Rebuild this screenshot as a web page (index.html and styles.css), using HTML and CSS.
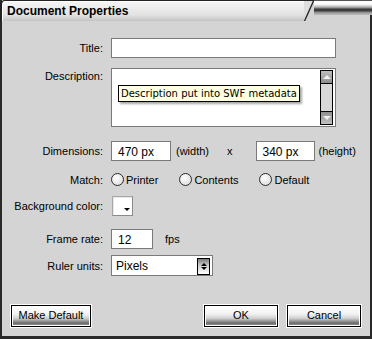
FILE: index.html
```html
<!DOCTYPE html>
<html>
<head>
    <link rel="stylesheet" href="styles.css">
</head>
<body>
    <div class="window">
        <!-- Title bar -->
        <div class="titlebar">
            <div class="tab">Document Properties</div>
            <svg class="slant" width="10" height="21" viewBox="0 0 10 21">
                <polygon points="0,1 9,1 1,21 0,21" fill="#dedede"/>
                <line x1="9.5" y1="1" x2="0.5" y2="21" stroke="#222" stroke-width="1.3"/>
                <line x1="0" y1="0.5" x2="10" y2="0.5" stroke="#222"/>
            </svg>
            <div class="stripes"></div>
        </div>

        <div class="form">
            <div class="row">
                <label class="label">Title:</label>
                <div class="field title-field"></div>
            </div>

            <div class="row row-top desc-row">
                <label class="label">Description:</label>
                <div class="field desc-field">
                    <div class="scrollbar">
                        <div class="sb-btn"><span class="tri-up"></span></div>
                        <div class="sb-track"></div>
                        <div class="sb-btn"><span class="tri-down"></span></div>
                    </div>
                    <div class="tooltip">Description put into SWF metadata</div>
                </div>
            </div>

            <div class="row dims-row">
                <label class="label">Dimensions:</label>
                <div class="field dim-field">470 px</div>
                <span class="unit">(width)</span>
                <span class="times">x</span>
                <div class="field dim-field dim2">340 px</div>
                <span class="unit unit-h">(height)</span>
            </div>

            <div class="row match-row">
                <label class="label">Match:</label>
                <div class="radios">
                    <span class="radio-item"><span class="radio"></span>Printer</span>
                    <span class="radio-item"><span class="radio"></span>Contents</span>
                    <span class="radio-item"><span class="radio"></span>Default</span>
                </div>
            </div>

            <div class="row bg-row">
                <label class="label">Background color:</label>
                <div class="swatch"><span class="tri-down small"></span></div>
            </div>

            <div class="row fps-row">
                <label class="label">Frame rate:</label>
                <div class="field fps-field">12</div>
                <span class="fps">fps</span>
            </div>

            <div class="row ruler-row">
                <label class="label">Ruler units:</label>
                <div class="field select-field">
                    <span class="select-text">Pixels</span>
                    <span class="spinner">
                        <span class="tri-up tiny"></span>
                        <span class="tri-down tiny"></span>
                    </span>
                </div>
            </div>
        </div>

        <div class="footer">
            <button class="btn btn-wide">Make Default</button>
            <div class="footer-right">
                <button class="btn">OK</button>
                <button class="btn">Cancel</button>
            </div>
        </div>
    </div>
</body>
</html>
```

FILE: styles.css
```css
body {
    margin: 0;
    font-family: "Liberation Sans", Arial, sans-serif;
    font-size: 11px;
    color: #000;
    background: #d4d4d4;
}

.window {
    width: 372px;
    height: 339px;
    box-sizing: border-box;
    background: #d4d4d4;
    border-left: 2px solid #2a2a2a;
    border-right: 2px solid #2a2a2a;
    border-bottom: 3px solid #2a2a2a;
    display: flex;
    flex-direction: column;
}

/* title bar */
.titlebar {
    display: flex;
    align-items: flex-start;
    height: 21px;
    margin-left: -2px;
    margin-right: -2px;
}

.tab {
    width: 304px;
    height: 21px;
    box-sizing: border-box;
    border-top: 1px solid #222;
    border-left: 2px solid #222;
    border-radius: 5px 0 0 0;
    background: linear-gradient(#f6f6f6, #e2e2e2 70%, #c4c4c4);
    box-shadow: inset 1px 1px 0 #fff;
    font-weight: bold;
    font-size: 12px;
    padding: 3px 0 0 5px;
}

.slant {
    display: block;
    flex: none;
}

.stripes {
    flex: 1;
    height: 15px;
    background: linear-gradient(to bottom,
        #555 0px, #555 1px,
        #ffffff 1px, #ffffff 4px,
        #d0d0d0 6px,
        #8c8c8c 8px,
        #3c3c3c 9px, #3c3c3c 11px,
        #8a8a8a 12px,
        #c0c0c0 15px);
}

/* form */
.form {
    padding-top: 17px;
}

.row {
    display: flex;
    align-items: center;
}

.row-top {
    align-items: flex-start;
}

.label {
    width: 101px;
    margin-right: 8px;
    text-align: right;
    flex: none;
}

.field {
    box-sizing: border-box;
    height: 20px;
    background: #fff;
    border: 1px solid #7a7a7a;
    padding: 3px 6px 0;
    position: relative;
    font-size: 12px;
}

.title-field {
    width: 225px;
}

.desc-row {
    margin-top: 10px;
}

.desc-row .label {
    padding-top: 2px;
}

.desc-field {
    width: 225px;
    height: 59px;
    padding: 1px 1px 1px 0;
    display: flex;
    justify-content: flex-end;
}

.scrollbar {
    width: 13px;
    box-sizing: border-box;
    border: 1px solid #000;
    display: flex;
    flex-direction: column;
    margin-right: 1px;
    background: #d8d8d8;
}

.sb-btn {
    height: 12px;
    background: linear-gradient(#bdbdbd, #8e8e8e);
    display: flex;
    align-items: center;
    justify-content: center;
    border-bottom: 1px solid #000;
}

.sb-btn:last-child {
    border-bottom: none;
    border-top: 1px solid #000;
    background: linear-gradient(#8e8e8e, #c0c0c0);
}

.sb-track {
    flex: 1;
}

.tri-up, .tri-down {
    width: 0;
    height: 0;
    border-left: 4px solid transparent;
    border-right: 4px solid transparent;
}

.tri-up {
    border-bottom: 4px solid #f0f0f0;
}

.tri-down {
    border-top: 4px solid #f0f0f0;
}

.tooltip {
    position: absolute;
    left: 6px;
    top: 16px;
    background: #ffffe1;
    border: 1px solid #000;
    font-family: "DejaVu Sans", Verdana, sans-serif;
    font-size: 10px;
    padding: 2px 2px 2px 2px;
    white-space: nowrap;
    box-shadow: 2px 2px 2px rgba(0, 0, 0, 0.35);
}

.dims-row {
    margin-top: 14px;
}

.dim-field {
    width: 60px;
    padding-left: 6px;
}

.unit {
    margin-left: 5px;
}

.times {
    margin-left: 18px;
    margin-right: 23px;
}

.dim2 {
    width: 59px;
}

.unit-h {
    margin-left: 4px;
}

.match-row {
    margin-top: 12px;
}

.radios {
    display: flex;
    gap: 21px;
}

.radio-item {
    display: flex;
    align-items: center;
}

.radio {
    width: 13px;
    height: 13px;
    box-sizing: border-box;
    border: 1px solid #2a2a2a;
    border-radius: 50%;
    background: radial-gradient(circle at 40% 35%, #ffffff, #d6d6d6);
    margin-right: 2px;
}

.bg-row {
    margin-top: 10px;
}

.swatch {
    width: 21px;
    height: 20px;
    box-sizing: border-box;
    border: 1px solid #a8a8a8;
    border-right-color: #8a8a8a;
    border-bottom-color: #8a8a8a;
    background: #fff;
    box-shadow: inset 1px 1px 0 #e8e8e8;
    display: flex;
    align-items: flex-end;
    justify-content: flex-end;
    padding: 0 2px 4px 0;
    margin-left: 1px;
}

.tri-down.small {
    border-left-width: 3px;
    border-right-width: 3px;
    border-top: 3px solid #000;
}

.fps-row {
    margin-top: 13px;
}

.fps-field {
    width: 42px;
}

.fps {
    margin-left: 12px;
}

.ruler-row {
    margin-top: 6px;
}

.select-field {
    width: 102px;
    height: 21px;
    padding: 2px 2px 0 4px;
    display: flex;
    justify-content: space-between;
}

.select-text {
    padding-top: 1px;
}

.spinner {
    width: 13px;
    height: 17px;
    box-sizing: border-box;
    border: 1px solid #000;
    background: linear-gradient(#7a7a7a, #cfcfcf 45%, #ffffff);
    display: flex;
    flex-direction: column;
    align-items: center;
    justify-content: center;
    gap: 1px;
}

.tri-up.tiny {
    border-left-width: 3px;
    border-right-width: 3px;
    border-bottom: 3px solid #000;
}

.tri-down.tiny {
    border-left-width: 3px;
    border-right-width: 3px;
    border-top: 3px solid #000;
}

/* buttons */
.footer {
    margin-top: auto;
    padding: 0 9px 9px 9px;
    display: flex;
    justify-content: space-between;
}

.footer-right {
    display: flex;
    gap: 9px;
}

.btn {
    width: 74px;
    height: 22px;
    box-sizing: border-box;
    border: 1px solid #000;
    outline: 1px solid #fff;
    outline-offset: 0;
    padding: 0 0 2px;
    font-family: "Liberation Sans", Arial, sans-serif;
    font-size: 11px;
    color: #000;
    background: linear-gradient(#ffffff 0, #f2f2f2 40%, #cfcfcf 62%, #6a6a6a 86%, #a0a0a0 100%);
    box-shadow: inset 0 0 0 1px #fff;
}

.btn-wide {
    width: 80px;
}
```
